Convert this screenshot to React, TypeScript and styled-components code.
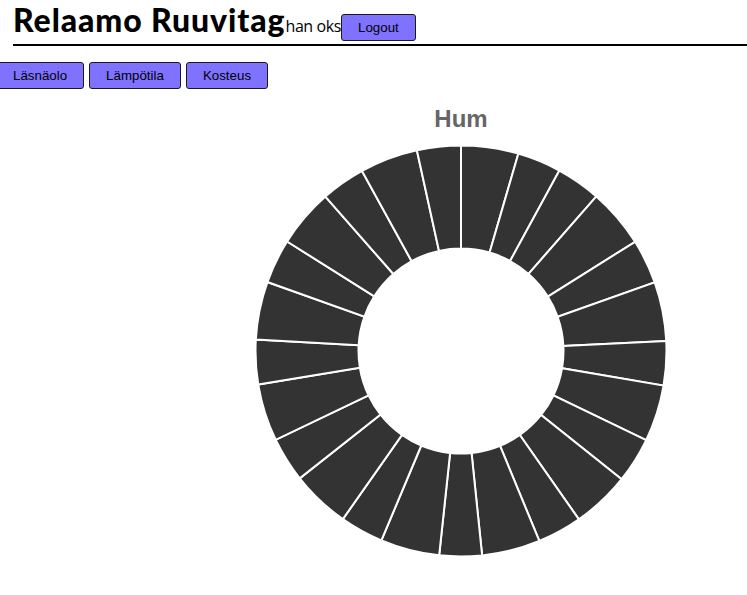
import React, { FC } from 'react'
import styled, { createGlobalStyle } from 'styled-components'

const GlobalStyle = createGlobalStyle`
  html, body {
    margin: 0;
    padding: 0;
    background: #fff;
  }
  body {
    font-family: 'Open Sans', 'Noto Sans', sans-serif;
    color: #000;
  }
`

// boundaries measured clockwise from 12 o'clock, in degrees
const BOUNDS = [
  0, 16.2, 28.6, 41.2, 57.9, 70.5, 87.2, 99.7, 115.7, 128.6, 145.0, 157.6, 174.1,
  186.1, 202.8, 215.1, 231.7, 244.4, 260.6, 273.2, 289.6, 302.2, 318.7, 331.2, 347.6, 360,
]

const SIZE = 414
const C = SIZE / 2
const R_OUT = 205.5
const R_IN = 102.5

const pt = (deg: number, r: number) => {
  const a = ((deg - 90) * Math.PI) / 180
  return `${(C + r * Math.cos(a)).toFixed(2)} ${(C + r * Math.sin(a)).toFixed(2)}`
}

const arcPath = (a0: number, a1: number) => {
  const large = a1 - a0 > 180 ? 1 : 0
  return [
    `M ${pt(a0, R_OUT)}`,
    `A ${R_OUT} ${R_OUT} 0 ${large} 1 ${pt(a1, R_OUT)}`,
    `L ${pt(a1, R_IN)}`,
    `A ${R_IN} ${R_IN} 0 ${large} 0 ${pt(a0, R_IN)}`,
    'Z',
  ].join(' ')
}

const App: FC = () => {
  const slices = BOUNDS.slice(0, -1).map((a, i) => [a, BOUNDS[i + 1]])

  return (
    <>
      <GlobalStyle />
      <Page>
        <Header>
          <Title>Relaamo Ruuvitag</Title>
          <User>han oks</User>
          <Button>Logout</Button>
        </Header>

        <Tabs>
          <Button>Läsnäolo</Button>
          <Button>Lämpötila</Button>
          <Button>Kosteus</Button>
        </Tabs>

        <ChartWrap>
          <ChartTitle>Hum</ChartTitle>
          <svg width={SIZE} height={SIZE} viewBox={`0 0 ${SIZE} ${SIZE}`}>
            {slices.map(([a0, a1], i) => (
              <path key={i} d={arcPath(a0, a1)} fill="#333333" stroke="#ffffff" strokeWidth={2} />
            ))}
          </svg>
        </ChartWrap>
      </Page>
    </>
  )
}

export default App

const Page = styled.div`
  width: 747px;
  min-height: 595px;
  overflow-x: hidden;
`

const Header = styled.div`
  display: flex;
  align-items: baseline;
  margin-left: 13px;
  height: 44px;
  border-bottom: 2px solid #000;
`

const Title = styled.h1`
  margin: 0;
  font-size: 32px;
  line-height: normal;
  font-weight: 900;
  font-family: Lato, 'Open Sans', sans-serif;
  letter-spacing: 0.9px;
`

const User = styled.span`
  font-size: 16px;
  font-family: 'Open Sans', sans-serif;
  letter-spacing: -0.4px;
`

const Button = styled.button`
  height: 27px;
  padding: 0 16px;
  background-color: #7f72ff;
  border: 1px solid #1a1a1a;
  border-radius: 3px;
  font-family: 'Liberation Sans', Arial, sans-serif;
  font-size: 13.33px;
  color: #000;
  cursor: pointer;
`

const Tabs = styled.div`
  display: flex;
  gap: 5px;
  margin-top: 16px;
  margin-left: -4px;
`

const ChartWrap = styled.div`
  display: flex;
  flex-direction: column;
  align-items: center;
  width: ${SIZE}px;
  margin-left: 254px;
`

const ChartTitle = styled.div`
  margin-top: 16px;
  margin-bottom: 11px;
  font-family: 'Liberation Sans', Arial, sans-serif;
  font-weight: 700;
  font-size: 24px;
  line-height: 28px;
  color: #666;
`
